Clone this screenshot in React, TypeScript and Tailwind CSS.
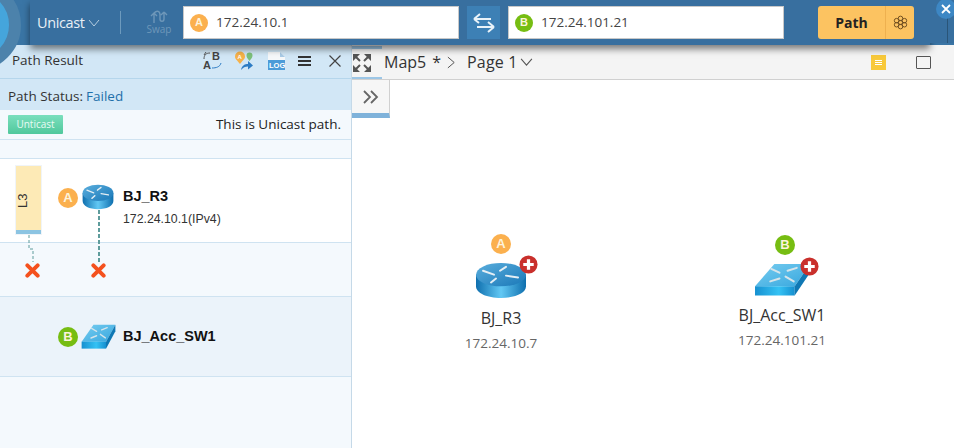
import type { ReactNode } from "react";

const sans = "font-['Open_Sans','Noto_Sans',sans-serif]";
const arial = "font-['Liberation_Sans',Arial,sans-serif]";

function Badge({ letter, small }: { letter: "A" | "B"; small?: boolean }) {
  const color = letter === "A" ? "bg-[#fbb04e]" : "bg-[#76bd12]";
  const dim = small ? "h-[18px] w-[18px] text-[11px]" : "h-5 w-5 text-[13px]";
  return (
    <span className={`flex shrink-0 items-center justify-center rounded-full font-bold text-[#fdf3dc] ${color} ${dim} ${arial}`}>
      {letter}
    </span>
  );
}

function RouterIcon({ className }: { className?: string }) {
  return (
    <svg viewBox="0 0 52 38" preserveAspectRatio="none" className={className}>
      <defs>
        <linearGradient id="rside" x1="0" x2="1" y1="0" y2="0">
          <stop offset="0" stopColor="#0f6fae" />
          <stop offset="0.5" stopColor="#62c8f4" />
          <stop offset="1" stopColor="#0f6fae" />
        </linearGradient>
        <linearGradient id="rtop" x1="0" x2="1" y1="0" y2="1">
          <stop offset="0" stopColor="#5aaedd" />
          <stop offset="1" stopColor="#1a78b8" />
        </linearGradient>
      </defs>
      <path d="M1 13v12c0 7 11 12 25 12s25-5 25-12V13z" fill="url(#rside)" />
      <ellipse cx="26" cy="13" rx="25" ry="12" fill="url(#rtop)" />
      <g stroke="#e4eef4" strokeWidth="2" strokeLinecap="round" fill="none">
        <path d="M8 9l11 4" />
        <path d="M25 9l6-4" />
        <path d="M31 14l12 2" />
        <path d="M16 21l5-4" />
      </g>
    </svg>
  );
}

function SwitchIcon({ className }: { className?: string }) {
  return (
    <svg viewBox="0 0 56 34" preserveAspectRatio="none" className={className}>
      <defs>
        <linearGradient id="sfront" x1="0" x2="1" y1="0" y2="0">
          <stop offset="0" stopColor="#1690d0" />
          <stop offset="0.6" stopColor="#35c2f4" />
          <stop offset="1" stopColor="#1690d0" />
        </linearGradient>
        <linearGradient id="stop" x1="0" x2="1" y1="0" y2="1">
          <stop offset="0" stopColor="#78cdf0" />
          <stop offset="1" stopColor="#35a6de" />
        </linearGradient>
      </defs>
      <path d="M1 24L20 1h35L40 24z" fill="url(#stop)" />
      <path d="M1 24h39v9.500H1z" fill="url(#sfront)" />
      <path d="M40 24L55 1v9L40 33.500z" fill="#0f78b4" />
      <g stroke="#d6e4ea" strokeWidth="2" strokeLinecap="round" fill="none">
        <path d="M17 6l8 4" />
        <path d="M33 8l9-3" />
        <path d="M16 19l9-3" />
        <path d="M31 14l8 5" />
      </g>
    </svg>
  );
}

function PlusBadge() {
  return (
    <svg viewBox="0 0 20 20" className="h-[19px] w-[19px]">
      <circle cx="10" cy="10" r="9.500" fill="#c9302c" />
      <path d="M10 4.500v11M4.500 10h11" stroke="#fff" strokeWidth="3.400" />
    </svg>
  );
}

function RedX() {
  return (
    <svg viewBox="0 0 16 16" className="h-[15px] w-[15px]">
      <path d="M2.500 2.500l11 11M13.500 2.500l-11 11" stroke="#f4511e" strokeWidth="4.200" strokeLinecap="round" />
    </svg>
  );
}

function MapNode({ icon, plus, badge, name, ip }: { icon: ReactNode; plus: string; badge: ReactNode; name: string; ip: string }) {
  return (
    <>
      {badge}
      <div className="relative mt-[8px]">
        {icon}
        <span className={`absolute ${plus}`}>
          <PlusBadge />
        </span>
      </div>
      <span className="mt-[9px] text-[16px] leading-[20px] text-[#333]">{name}</span>
      <span className="mt-[7px] text-[13.5px] leading-[16px] text-[#666]">{ip}</span>
    </>
  );
}

export default function App() {
  return (
    <div className={`relative flex h-[448px] w-[954px] flex-col overflow-hidden bg-white text-[#222] ${sans}`}>
      {/* top bar */}
      <div className="relative z-20 flex h-[45px] shrink-0 bg-[#3a75a5]">
        <div className="w-[30px] shrink-0" />
        <div className="flex h-[45px] w-[900px] shrink-0 items-center bg-[#386f9f] pl-[7px] shadow-[0_4px_7px_rgba(0,0,0,0.5)]">
          <span className="w-[49px] text-[14.5px] tracking-[-0.4px] text-[#e8f0f6]">Unicast</span>
          <svg viewBox="0 0 12 8" className="ml-[2px] h-[8px] w-[12px]">
            <path d="M1 1l5 6 5-6" stroke="#b5cde0" strokeWidth="1" fill="none" />
          </svg>
          <div className="ml-[20px] h-[23px] w-px bg-[#6d9abd]" />
          <div className="ml-[25px] flex w-[26px] flex-col items-center">
            <svg viewBox="0 0 20 14" className="h-[14px] w-[20px]">
              <path d="M5 13V3M5 3L2 6M5 3l3 3M5 3c3-3 6-2 6 2v4c0 3 4 3 4 0V2M15 2l-3 3M15 2l3 3" stroke="#6e97b9" strokeWidth="1.400" fill="none" />
            </svg>
            <span className="text-[10px] leading-[11px] text-[#6e97b9]">Swap</span>
          </div>
          <div className="ml-[11px] flex h-[33px] w-[276px] shrink-0 items-center border border-[#c8c8c8] bg-white pl-[6px]">
            <Badge letter="A" small />
            <span className="ml-[8px] text-[13.5px] text-[#444]">172.24.10.1</span>
          </div>
          <div className="ml-[8px] flex h-[33px] w-[33px] shrink-0 items-center justify-center bg-[#3d80b5]">
            <svg viewBox="0 0 26 22" className="h-[22px] w-[26px]">
              <path d="M20 7H3M3 7l6-5M3 7l5 4M6 15h17M23 15l-6-5M23 15l-6 5" stroke="#eaf3f9" strokeWidth="2" fill="none" />
            </svg>
          </div>
          <div className="ml-[8px] flex h-[33px] w-[276px] shrink-0 items-center border border-[#c8c8c8] bg-white pl-[6px]">
            <Badge letter="B" small />
            <span className="ml-[8px] text-[13.5px] text-[#444]">172.24.101.21</span>
          </div>
          <div className="ml-[34px] flex h-[33px] w-[96px] shrink-0 overflow-hidden rounded-[3px] bg-[#fcc361]">
            <span className="flex w-[67px] items-center justify-center text-[14px] font-bold text-[#222]">Path</span>
            <span className="flex flex-1 items-center justify-center border-l border-[#eeb04f]">
              <svg viewBox="0 0 16 16" className="h-[15px] w-[15px]">
                <g fill="none" stroke="#6b4a1e" strokeWidth="1">
                  <circle cx="8" cy="8" r="2.200" />
                  <circle cx="8" cy="3.600" r="2.400" />
                  <circle cx="8" cy="12.400" r="2.400" />
                  <circle cx="3.800" cy="6" r="2.400" />
                  <circle cx="12.200" cy="6" r="2.400" />
                  <circle cx="3.800" cy="10.400" r="2.400" />
                  <circle cx="12.200" cy="10.400" r="2.400" />
                </g>
              </svg>
            </span>
          </div>
        </div>
        <div className="flex h-[43px] flex-1 justify-end bg-[#386f9f]">
          <div className="w-[7px] border-l border-[#2a5578]" />
        </div>
        <span className="absolute right-[-2px] top-[-1px] flex h-5 w-5 items-center justify-center rounded-full bg-[#3d87c4]">
          <svg viewBox="0 0 10 10" className="h-[10px] w-[10px]">
            <path d="M1 1l8 8M9 1l-8 8" stroke="#fff" strokeWidth="1.800" />
          </svg>
        </span>
      </div>

      {/* logo ring, sits over the bar and the panel */}
      <div className="absolute left-[-71px] top-[-21px] z-30 h-[92px] w-[92px] rounded-full border-[12px] border-[#4c82ab] bg-[#45a5dc]" />

      <div className="flex min-h-0 flex-1">
        {/* left panel */}
        <div className="flex w-[352px] shrink-0 flex-col border-r border-[#c5d9e8] bg-[#f4f9fd]">
          <div className="flex h-[34px] shrink-0 items-center border-b border-[#b5d6ec] bg-[#d2e7f6] pb-[2px] pl-[12px] pr-[10px]">
            <span className="text-[13.5px] text-[#333]">Path Result</span>
            <div className="ml-auto flex items-center">
              <svg viewBox="0 0 20 19" className="h-[19px] w-[20px]">
                <text x="10" y="9" fontSize="11" fontWeight="700" fill="#444" fontFamily="Liberation Sans">B</text>
                <text x="1" y="18" fontSize="11" fontWeight="700" fill="#444" fontFamily="Liberation Sans">A</text>
                <path d="M2 8c0-4 2-6 6-6M4 1L2 4" stroke="#555" fill="none" />
                <path d="M10 17c4 0 8-1 9-5" stroke="#2d7cc4" fill="none" />
              </svg>
              <svg viewBox="0 0 20 19" className="ml-[12px] h-[19px] w-[20px]">
                <path d="M6 13C3 9 1 8 1 5.500a5 5 0 0 1 10 0C11 8 9 9 6 13z" fill="#f6b24a" />
                <text x="3.500" y="8" fontSize="6" fontWeight="700" fill="#fff" fontFamily="Liberation Sans">A</text>
                <path d="M15.500 10c-2-3-3-3.500-3-5.500a3 3 0 0 1 6 0c0 2-1 2.500-3 5.500z" fill="#7cc07a" />
                <path d="M7 19c1-5 4-6 7-6v-3l5 4.500-5 4v-3c-3 0-5 1-7 3.500z" fill="#2d7cc4" />
              </svg>
              <svg viewBox="0 0 19 18" className="ml-[13px] h-[18px] w-[19px]">
                <path d="M1 0h12l5 5v13H1z" fill="#f6f8fa" />
                <path d="M13 0v5h5z" fill="#a9cbe6" />
                <path d="M1 8h17v10H1z" fill="#4c9bd8" />
                <text x="2" y="16" fontSize="7.500" fontWeight="700" fill="#fff" fontFamily="Liberation Sans">LOG</text>
              </svg>
              <div className="ml-[12px] flex w-[13px] flex-col gap-[2px]">
                <span className="h-[2px] bg-[#333]" />
                <span className="h-[2px] bg-[#333]" />
                <span className="h-[2px] bg-[#333]" />
              </div>
              <svg viewBox="0 0 12 12" className="ml-[18px] h-[12px] w-[12px]">
                <path d="M.500.500l11 11M11.500.500l-11 11" stroke="#444" strokeWidth="1.200" />
              </svg>
            </div>
          </div>
          <div className="flex h-[31px] shrink-0 items-center bg-[#d2e7f6] pl-[8px] pt-[3px] text-[13.5px]">
            <span className="text-[#333]">Path Status:</span>
            <span className="ml-[3px] text-[#1f70aa]">Failed</span>
          </div>
          <div className="flex h-[30px] shrink-0 items-center justify-between border-b border-[#cfe3f1] pl-[8px] pr-[10px]">
            <span className="flex h-[19px] w-[55px] items-center justify-center rounded-[1px] bg-gradient-to-b from-[#7adfbd] to-[#4fc89c] text-[10px] text-[#e9fbf4]">Unticast</span>
            <span className="text-[13.5px] text-[#222]">This is Unicast path.</span>
          </div>
          <div className="h-[18px] shrink-0" />
          {/* hop rows */}
          <div className="relative flex h-[85px] shrink-0 border-y border-[#cfe3f1] bg-white pl-[58px] pt-[29px]">
            <Badge letter="A" />
            <RouterIcon className="ml-[4px] mt-[-4px] h-[26px] w-[32px]" />
            <div className={`ml-[9px] mt-[-2px] ${arial}`}>
              <div className="text-[14.5px] font-bold leading-[20px] text-[#111]">BJ_R3</div>
              <div className="mt-[5px] text-[12.3px] leading-[16px] text-[#333]">172.24.10.1(IPv4)</div>
            </div>
            <div className="absolute left-[15px] top-[6px] flex h-[70px] w-[27px] flex-col border border-[#f0f4f8] bg-[#fdeab6]">
              <span className={`flex flex-1 items-center pt-[6px] text-[13px] text-[#333] ${arial}`}>
                <span className="-rotate-90">L3</span>
              </span>
              <span className="h-[4px] bg-[#8cc4e2]" />
            </div>
          </div>
          <div className="relative h-[53px] shrink-0">
            <svg viewBox="0 0 110 60" className="absolute left-0 top-[-33px] h-[60px] w-[110px]">
              <path d="M99 0V52" stroke="#5e9c9c" strokeWidth="2" strokeDasharray="4 2" fill="none" />
              <path d="M29 25V39H33V52" stroke="#5e9c9c" strokeWidth="1" strokeDasharray="3 2" fill="none" />
            </svg>
            <span className="absolute left-[25px] top-[20px]"><RedX /></span>
            <span className="absolute left-[91px] top-[20px]"><RedX /></span>
          </div>
          <div className="flex h-[81px] shrink-0 items-start border-y border-[#cfe3f1] bg-[#ebf3fa] pl-[58px] pt-[30px]">
            <Badge letter="B" />
            <SwitchIcon className="ml-[3px] mt-[-3px] h-[25px] w-[35px]" />
            <span className={`ml-[7px] mt-[-1px] text-[14.5px] font-bold leading-[20px] text-[#111] ${arial}`}>BJ_Acc_SW1</span>
          </div>
        </div>

        {/* map */}
        <div className="flex min-w-0 flex-1 flex-col">
          <div className="flex h-[35px] shrink-0 items-center border-b border-[#d0d0d0] bg-[#f4f4f4] pr-[23px]">
            <div className="flex h-[33px] w-[30px] shrink-0 items-center justify-center self-end border-b-[2px] border-t-[3px] border-[#9cc6e6] pr-[10px]">
              <svg viewBox="0 0 18 18" className="h-[18px] w-[18px] shrink-0">
                <path d="M0 0h7L0 7zM18 0v7l-7-7zM0 18v-7l7 7zM18 18h-7l7-7z" fill="#555" />
                <path d="M2 2l5 5M16 2l-5 5M2 16l5-5M16 16l-5-5" stroke="#555" strokeWidth="2" />
              </svg>
            </div>
            <span className="ml-[2px] text-[16px] text-[#333]">Map5</span>
            <span className="ml-[6px] text-[16px] text-[#333]">*</span>
            <svg viewBox="0 0 10 14" className="ml-[6px] h-[13px] w-[9px]">
              <path d="M1 1l7 6-7 6" stroke="#555" strokeWidth="1.100" fill="none" />
            </svg>
            <span className="ml-[11px] text-[16px] tracking-[0.2px] text-[#333]">Page 1</span>
            <svg viewBox="0 0 14 10" className="ml-[2px] h-[9px] w-[13px]">
              <path d="M1 1l6 7 6-7" stroke="#555" strokeWidth="1.200" fill="none" />
            </svg>
            <span className="ml-auto flex h-[15px] w-[15px] flex-col items-center justify-center gap-[1px] bg-[#f8c93a]">
              <span className="h-px w-[7px] bg-white" />
              <span className="h-px w-[7px] bg-white" />
              <span className="h-px w-[7px] bg-white" />
            </span>
            <span className="ml-[30px] h-[13px] w-[15px] rounded-[1px] border-[1.5px] border-[#555]" />
          </div>
          <div className="flex h-[38px] w-[38px] shrink-0 items-center justify-center border-b-[5px] border-r border-b-[#7fb2da] border-r-[#d0d0d0] bg-[#f6f6f6]">
            <svg viewBox="0 0 16 14" className="h-[14px] w-[16px]">
              <path d="M1 1l6 6-6 6M8 1l6 6-6 6" stroke="#666" strokeWidth="1.800" fill="none" />
            </svg>
          </div>
          <div className="flex flex-1 items-start pl-[109px] pt-[116px]">
            <div className="flex w-[80px] flex-col items-center">
              <MapNode
                badge={<Badge letter="A" />}
                icon={<RouterIcon className="h-[37px] w-[52px]" />}
                plus="right-[-11px] top-[-7px]"
                name="BJ_R3"
                ip="172.24.10.7"
              />
            </div>
            <div className="ml-[191px] mt-[1px] flex w-[100px] flex-col items-center">
              <MapNode
                badge={<span className="ml-[6px]"><Badge letter="B" /></span>}
                icon={<SwitchIcon className="h-[33px] w-[57px]" />}
                plus="right-[-8px] top-[-6px]"
                name="BJ_Acc_SW1"
                ip="172.24.101.21"
              />
            </div>
          </div>
        </div>
      </div>
    </div>
  );
}
